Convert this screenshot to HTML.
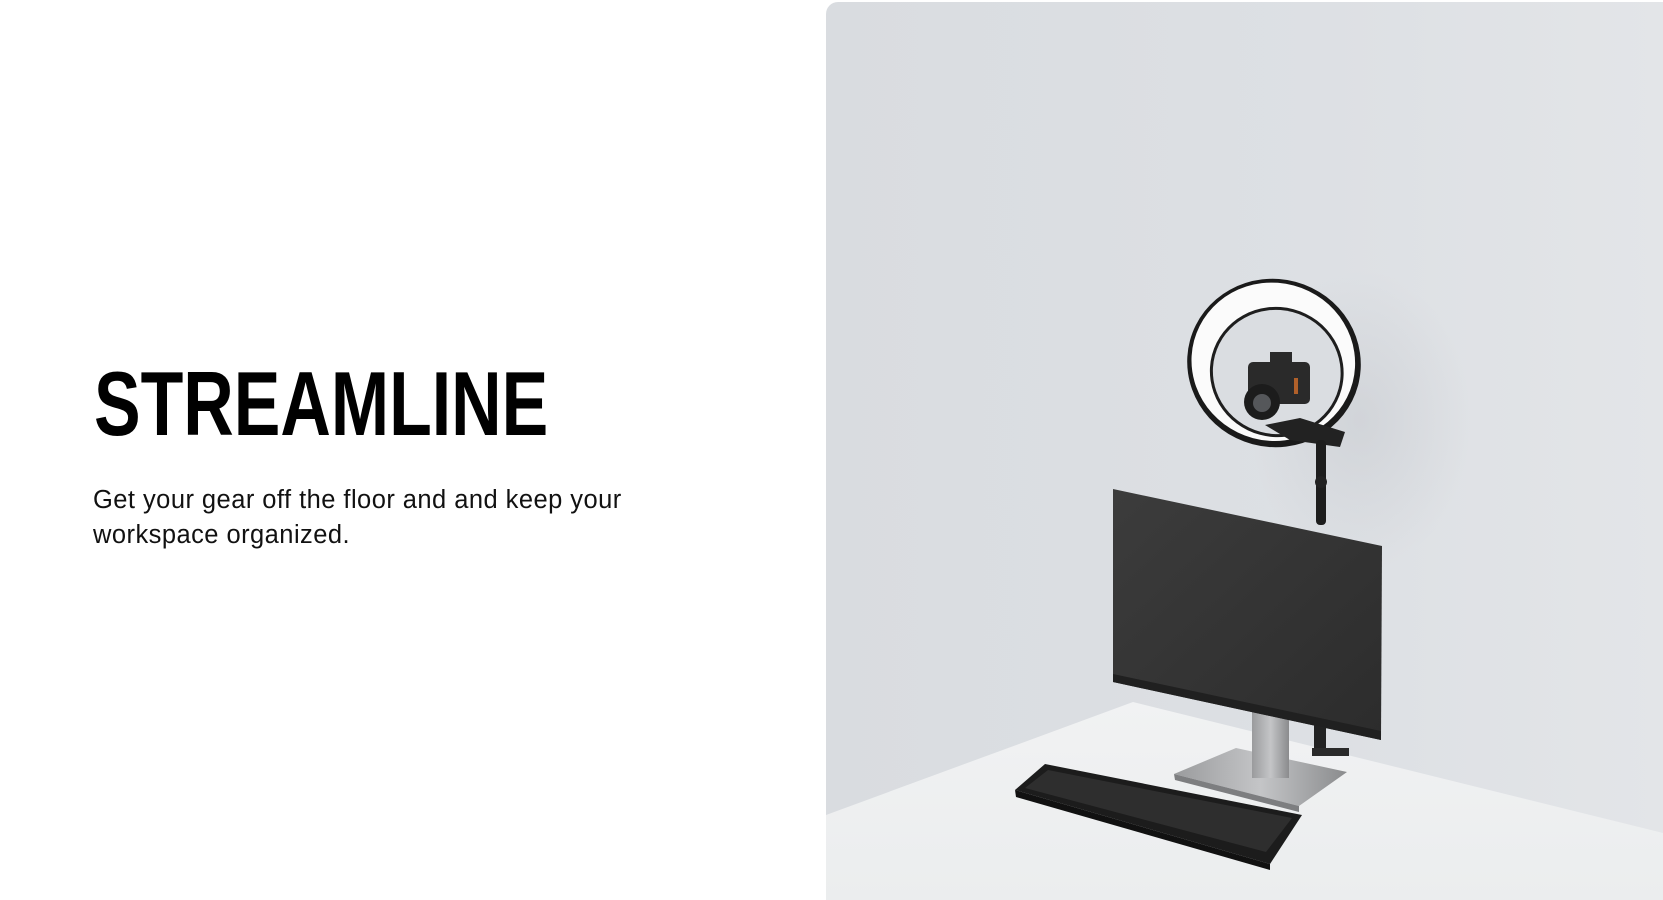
<!DOCTYPE html>
<html><head><meta charset="utf-8"><style>
html,body{margin:0;padding:0;width:1663px;height:900px;overflow:hidden;background:#fff}
.t{position:absolute;left:94px;top:359px;font:bold 91px/1 "Liberation Sans",sans-serif;color:#000;transform:scaleX(0.768);transform-origin:0 0;white-space:nowrap;letter-spacing:0}
.p{position:absolute;left:93px;top:483px;font:25.5px/35px "Liberation Sans",sans-serif;color:#111;letter-spacing:0.45px;width:610px}
.panel{position:absolute;left:826px;top:2px;width:837px;height:898px;border-top-left-radius:12px;overflow:hidden;background:linear-gradient(90deg,#d9dce0 0%,#dde0e4 60%,#e3e5e8 100%)}
svg{position:absolute;left:0;top:0}
</style></head><body>
<div class="t">STREAMLINE</div>
<div class="p">Get your gear off the floor and and keep your workspace organized.</div>
<div class="panel">
<svg width="837" height="898" viewBox="826 2 837 898">
<defs>
<linearGradient id="fl" x1="0" y1="0" x2="0" y2="1"><stop offset="0" stop-color="#f1f2f3"/><stop offset="1" stop-color="#ebedee"/></linearGradient>
<linearGradient id="mon" x1="0" y1="0" x2="1" y2="1"><stop offset="0" stop-color="#3c3c3c"/><stop offset="1" stop-color="#2c2c2c"/></linearGradient>
<linearGradient id="st" x1="0" y1="0" x2="1" y2="0"><stop offset="0" stop-color="#9a9b9d"/><stop offset="0.5" stop-color="#c4c5c7"/><stop offset="1" stop-color="#8a8b8d"/></linearGradient>
<radialGradient id="sh" cx="0.5" cy="0.5" r="0.5"><stop offset="0" stop-color="#c9ccd1" stop-opacity="0.6"/><stop offset="1" stop-color="#c9ccd1" stop-opacity="0"/></radialGradient>
</defs>
<ellipse cx="1360" cy="420" rx="110" ry="150" fill="url(#sh)"/>
<polygon points="826,815 1133,702 1663,833 1663,900 826,900" fill="url(#fl)"/>
<ellipse cx="1274" cy="363" rx="87" ry="84" fill="#1a1a1a" transform="rotate(15 1274 363)"/>
<ellipse cx="1273" cy="362" rx="82" ry="79" fill="#fbfbfb" transform="rotate(15 1274 363)"/>
<ellipse cx="1279" cy="371" rx="67" ry="65" fill="#1e1e1e" transform="rotate(15 1274 363)"/>
<ellipse cx="1279" cy="371" rx="64" ry="62" fill="#dadde1" transform="rotate(15 1274 363)"/>
<polygon points="1265,425 1300,418 1345,432 1340,447 1290,440" fill="#222"/>
<rect x="1248" y="362" width="62" height="42" rx="5" fill="#2a2a2a"/>
<rect x="1270" y="352" width="22" height="14" fill="#2a2a2a"/>
<circle cx="1262" cy="402" r="18" fill="#1c1c1c"/>
<circle cx="1262" cy="403" r="9" fill="#55575a"/>
<rect x="1294" y="378" width="4" height="16" fill="#b0602a"/>
<rect x="1316" y="440" width="10" height="85" rx="4" fill="#1d1d1d"/>
<circle cx="1321" cy="482" r="6" fill="#222"/>
<rect x="1314" y="720" width="12" height="34" rx="4" fill="#222"/>
<rect x="1312" y="748" width="37" height="8" fill="#2a2a2a"/>
<polygon points="1174,774 1236,748 1347,772 1299,806" fill="url(#st)"/>
<polygon points="1174,774 1299,806 1299,812 1175,780" fill="#7d7e80"/>
<rect x="1252" y="700" width="37" height="78" fill="url(#st)"/>
<polygon points="1113,489 1382,546 1381,740 1113,682" fill="url(#mon)"/>
<polygon points="1113,674 1381,731 1381,740 1113,682" fill="#202020"/>
<polygon points="1015,790 1045,764 1302,815 1270,864" fill="#1c1c1c"/>
<polygon points="1025,788 1048,770 1292,818 1266,852" fill="#2e2e2e"/>
<polygon points="1015,790 1270,864 1270,870 1016,797" fill="#111"/>
</svg>
</div>
</body></html>
